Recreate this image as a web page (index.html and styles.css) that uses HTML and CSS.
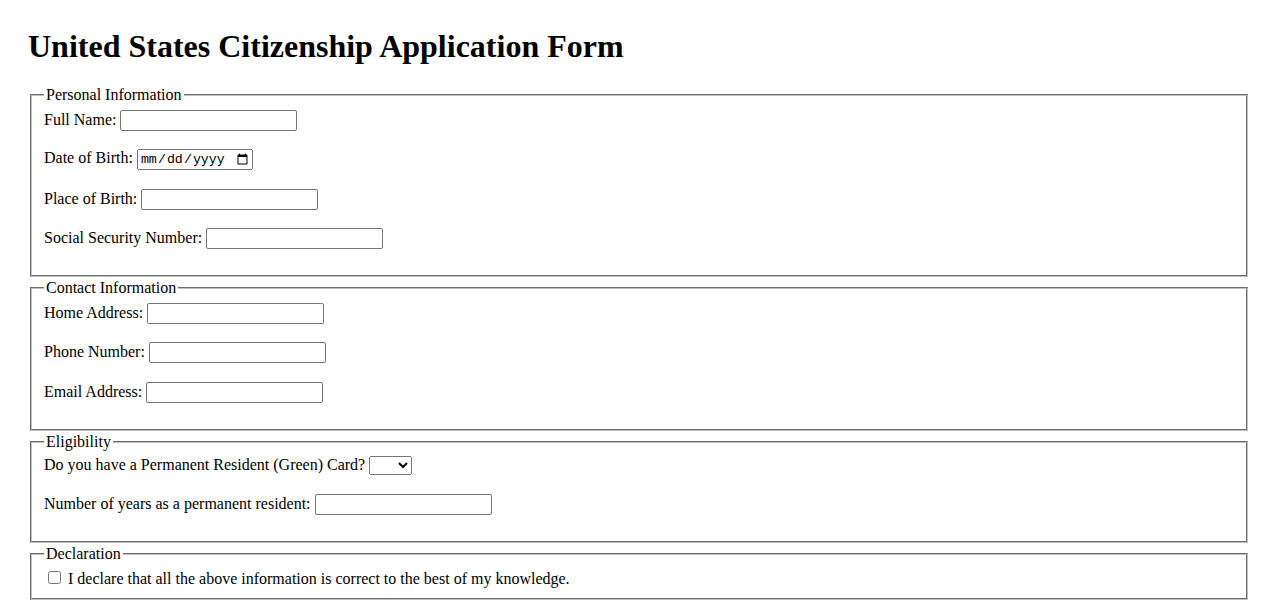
FILE: index.html
```html
<!DOCTYPE html>
<html lang="en">
<head>
<meta charset="utf-8">
<title>United States Citizenship Application Form</title>
<link rel="stylesheet" href="styles.css">
</head>
<body>
<div class="page">
  <h1>United States Citizenship Application Form</h1>
  <form>
    <fieldset>
      <legend>Personal Information</legend>
      <div class="row"><label for="name">Full Name:</label> <input type="text" id="name"></div>
      <div class="row"><label for="dob">Date of Birth:</label> <input type="date" id="dob" class="date"></div>
      <div class="row"><label for="pob">Place of Birth:</label> <input type="text" id="pob"></div>
      <div class="row"><label for="ssn">Social Security Number:</label> <input type="text" id="ssn"></div>
    </fieldset>
    <fieldset>
      <legend>Contact Information</legend>
      <div class="row"><label for="addr">Home Address:</label> <input type="text" id="addr"></div>
      <div class="row"><label for="phone">Phone Number:</label> <input type="tel" id="phone"></div>
      <div class="row"><label for="email">Email Address:</label> <input type="email" id="email"></div>
    </fieldset>
    <fieldset>
      <legend>Eligibility</legend>
      <div class="row"><label for="gc">Do you have a Permanent Resident (Green) Card?</label> <select id="gc" class="yesno"><option value=""></option><option value="yes">Yes</option><option value="no">No</option></select></div>
      <div class="row"><label for="years">Number of years as a permanent resident:</label> <input type="number" id="years" class="num"></div>
    </fieldset>
    <fieldset>
      <legend>Declaration</legend>
      <div class="row-last"><input type="checkbox" id="decl"> <label for="decl">I declare that all the above information is correct to the best of my knowledge.</label></div>
    </fieldset>
  </form>
</div>
</body>
</html>
```
FILE: styles.css
```css
html, body {
  background: #ffffff;
}
body {
  margin: 8px;
  font-family: "Liberation Serif", "Times New Roman", serif;
  font-size: 16px;
  color: #000;
}
.page {
  padding: 20px;
}
h1 {
  margin: 0 0 21.44px;
  font-size: 32px;
  font-weight: bold;
}
fieldset {
  margin: 2px;
  padding: 5.6px 12px 10px;
  border: 2px groove rgb(192, 192, 192);
}
legend {
  padding: 0 2px;
}
.row {
  margin-bottom: 18.4px;
}
.row:last-child {
  margin-bottom: 16px;
}
input[type="text"],
input[type="tel"],
input[type="email"],
input.num {
  font-family: "Liberation Sans", Arial, sans-serif;
  font-size: 13.333px;
  padding: 1px 2px;
  border: 1px solid #767676;
  border-radius: 2px;
  box-sizing: border-box;
  height: 21px;
  width: 177px;
}
input.num {
  -moz-appearance: textfield;
  appearance: textfield;
}
input.num::-webkit-inner-spin-button,
input.num::-webkit-outer-spin-button {
  -webkit-appearance: none;
  margin: 0;
}
input.date {
  font-family: "Liberation Mono", "DejaVu Sans Mono", monospace;
  font-size: 13.333px;
  width: 116px;
  height: 21px;
  box-sizing: border-box;
}
select.yesno {
  font-family: "Liberation Sans", Arial, sans-serif;
  font-size: 13.333px;
  width: 43px;
  height: 19px;
}
```
